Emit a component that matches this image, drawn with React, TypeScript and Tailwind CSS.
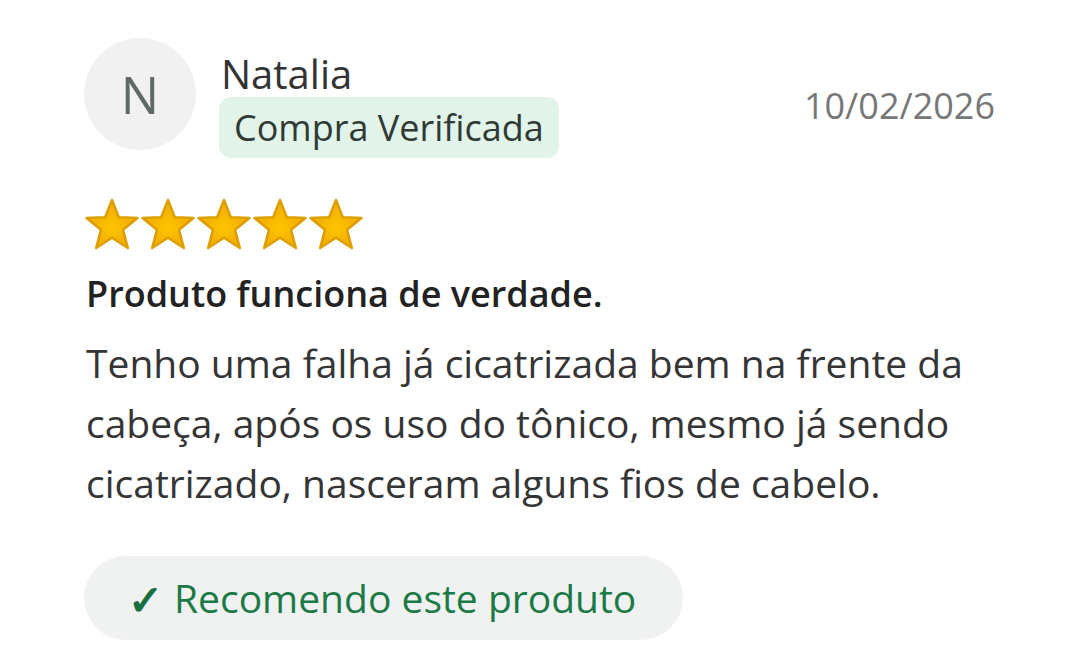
import React from "react";

const Star = () => (
  <svg width="56" height="54" viewBox="0 0 56 54">
    <defs>
      <radialGradient id="g" cx="50%" cy="55%" r="55%">
        <stop offset="0%" stopColor="#ffc400" />
        <stop offset="100%" stopColor="#f0a800" />
      </radialGradient>
    </defs>
    <path
      d="M28 2 L34.8 19.2 L53.5 20 L39 31.8 L43.9 50 L28 39.8 L12.1 50 L17 31.8 L2.5 20 L21.2 19.2 Z"
      fill="url(#g)"
      stroke="#dc9e00"
      strokeWidth="2.5"
      strokeLinejoin="round"
    />
  </svg>
);

export default function App() {
  return (
    <div className="min-h-[671px] w-[1080px] bg-white font-['Open_Sans',sans-serif]">
      <div className="ml-[84px] w-[911px] pt-[38px]">
        <div className="flex items-start justify-between">
          <div className="flex items-start gap-[23px]">
            <div className="flex h-[112px] w-[112px] items-center justify-center rounded-full bg-[#f0f1f0] text-[51px] font-medium leading-none text-[#5f6965]">
              N
            </div>
            <div className="flex flex-col items-start pt-[12px]">
              <div className="pl-[2px] text-[40px] font-medium leading-[47px] text-[#333]">Natalia</div>
              <div className="rounded-[12px] bg-[#e2f3e9] px-[15px] py-[6px] text-[36px] leading-[49px] text-[#2f3a34]">
                Compra Verificada
              </div>
            </div>
          </div>
          <div className="pt-[48px] text-[36px] leading-[40px] text-[#777]">10/02/2026</div>
        </div>

        <div className="mt-[40px] flex">
          {[0, 1, 2, 3, 4].map((i) => (
            <Star key={i} />
          ))}
        </div>

        <div className="mt-[22px] pl-[2px] text-[36px] font-semibold leading-[40px] text-[#222]">
          Produto funciona de verdade.
        </div>
        <p className="mt-[19px] pl-[2px] text-[39px] leading-[60px] text-[#353535]">
          Tenho uma falha já cicatrizada bem na frente da
          <br />
          cabeça, após os uso do tônico, mesmo já sendo
          <br />
          cicatrizado, nasceram alguns fios de cabelo.
        </p>

        <div className="mt-[43px] flex h-[84px] w-[599px] items-center rounded-full bg-[#f0f2f1] pl-[44px] text-[39px] text-[#1b7a45]">
          <span className="text-[42px] font-bold text-[#17703f]">✓</span>
          <span className="ml-[11px]">Recomendo este produto</span>
        </div>
      </div>
    </div>
  );
}
